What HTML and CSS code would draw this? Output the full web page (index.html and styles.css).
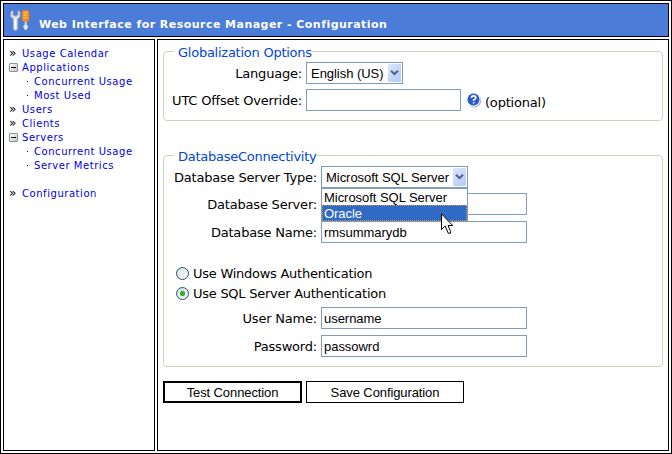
FILE: index.html
```html
<!DOCTYPE html>
<html lang="en">
<head>
<meta charset="utf-8">
<title>Web Interface for Resource Manager - Configuration</title>
<link rel="stylesheet" href="styles.css">
</head>
<body>
<div class="frame">
  <header class="banner">
    <svg class="tools" width="20" height="22" viewBox="0 0 20 22">
      <path d="M1 1.5 L3 0.5 V5 L5.5 6 L8 5 V0.5 L10 2 V6.5 L7.7 9 V18.5 Q7.5 20.5 5.5 20.5 T3.3 18.5 V9 L0.7 6.5 Z" fill="#dedede" stroke="#a9adb5" stroke-width=".8"/>
      <path d="M5 9 V18" stroke="#fff" stroke-width="1.5"/>
      <rect x="12.2" y=".6" width="6.8" height="10.6" rx="1.6" fill="#f6921e" stroke="#e27a13" stroke-width=".7"/>
      <path d="M13.5 2.5 H17 M13.5 5 H17 M13.5 7.5 H17" stroke="#ffc978" stroke-width="1.2"/>
      <path d="M14.9 11.4 H16.5 V14.5 L18.2 16.5 L16.8 19.7 H14.6 L13.2 16.5 L14.9 14.5 Z" fill="#e6e6e6" stroke="#b5b9c2" stroke-width=".5"/>
    </svg>
    <h1 class="title">Web Interface for Resource Manager - Configuration</h1>
  </header>
  <div class="columns">
    <nav class="menu">
      <a class="item"><i class="mark">»</i><span>Usage Calendar</span></a>
      <a class="item"><i class="fold"></i><span>Applications</span></a>
      <a class="item sub"><i class="dot"></i><span>Concurrent Usage</span></a>
      <a class="item sub"><i class="dot"></i><span>Most Used</span></a>
      <a class="item"><i class="mark">»</i><span>Users</span></a>
      <a class="item"><i class="mark">»</i><span>Clients</span></a>
      <a class="item"><i class="fold"></i><span>Servers</span></a>
      <a class="item sub"><i class="dot"></i><span>Concurrent Usage</span></a>
      <a class="item sub"><i class="dot"></i><span>Server Metrics</span></a>
      <a class="item spaced"><i class="mark">»</i><span>Configuration</span></a>
    </nav>
    <main class="content">
      <fieldset class="group global">
        <legend>Globalization Options</legend>
        <div class="row">
          <label class="label">Language:</label>
          <div class="select lang"><span>English (US)</span><b class="arrow"><svg width="9" height="6" viewBox="0 0 9 6"><path d="M1 .8 L4.5 4.2 L8 .8" fill="none" stroke="#4d6185" stroke-width="2"/></svg></b></div>
        </div>
        <div class="row">
          <label class="label">UTC Offset Override:</label>
          <div class="input offset"></div>
          <svg class="help" width="16" height="16" viewBox="0 0 16 16">
            <circle cx="8.4" cy="8.6" r="7" fill="#b9bcc4"/>
            <circle cx="7.5" cy="7.4" r="7" fill="#f3f4f8"/>
            <circle cx="7.5" cy="7.4" r="6" fill="#2a5bcb"/>
            <path d="M5.4 6 Q5.4 3.9 7.6 3.9 T9.8 5.8 Q9.8 7 7.6 8.2 V9 M7.6 10 V11.6" fill="none" stroke="#fff" stroke-width="1.6"/>
          </svg>
          <span class="optional">(optional)</span>
        </div>
      </fieldset>
      <fieldset class="group database">
        <legend>DatabaseConnectivity</legend>
        <div class="row">
          <label class="label">Database Server Type:</label>
          <div class="select type"><span>Microsoft SQL Server</span><b class="arrow"><svg width="9" height="6" viewBox="0 0 9 6"><path d="M1 .8 L4.5 4.2 L8 .8" fill="none" stroke="#4d6185" stroke-width="2"/></svg></b>
            <div class="list">
              <div class="option">Microsoft SQL Server</div>
              <div class="option chosen">Oracle</div>
              <svg class="cursor" width="13" height="22" viewBox="0 0 13 22"><path d="M.5 .8 V16.5 L4.2 13 L7.2 20.2 H9.6 V18.5 L7 12.5 H11.7 Z" fill="#fff" stroke="#000"/></svg>
            </div>
          </div>
        </div>
        <div class="row">
          <label class="label">Database Server:</label>
          <div class="input"></div>
        </div>
        <div class="row name">
          <label class="label">Database Name:</label>
          <div class="input">rmsummarydb</div>
        </div>
        <div class="choice first"><i class="radio"></i><span>Use Windows Authentication</span></div>
        <div class="choice"><i class="radio on"></i><span>Use SQL Server Authentication</span></div>
        <div class="row user">
          <label class="label">User Name:</label>
          <div class="input">username</div>
        </div>
        <div class="row name">
          <label class="label">Password:</label>
          <div class="input">passowrd</div>
        </div>
      </fieldset>
      <div class="buttons">
        <button class="button test">Test Connection</button>
        <button class="button save">Save Configuration</button>
      </div>
    </main>
  </div>
</div>
</body>
</html>
```
FILE: styles.css
```css
* { box-sizing: border-box; }
body { margin: 0; background: #fff; color: #000; }
.frame {
  width: 672px; height: 454px; padding: 2px;
  border: 1px solid #000;
  display: flex; flex-direction: column; gap: 2px;
  font: 13px/16px "DejaVu Sans", sans-serif;
  letter-spacing: -.2px;
}
.banner {
  height: 34px; border: 1px solid #000; background: #4a7cd8;
  display: flex; align-items: flex-start; padding: 6px 0 0 6px;
}
.tools { flex: none; }
.title {
  margin: 7px 0 0 9px; color: #fff;
  font-size: 11px; line-height: 16px; letter-spacing: .46px; white-space: nowrap;
}
.columns { flex: 1; display: flex; gap: 2px; }
.menu {
  width: 152px; border: 1px solid #000; padding: 6px 0 0 5px;
  font-size: 10px; line-height: 14px; letter-spacing: .55px; color: #0000e6;
}
.item { display: flex; align-items: center; height: 14px; white-space: nowrap; }
.item span { padding-top: 1px; }
.item i { flex: none; width: 13px; font-style: normal; color: #000; }
.item .mark { font-size: 12px; line-height: 12px; }
.item .fold {
  width: 9px; height: 9px; margin: 0 4px 0 0; border: 1px solid #7898b5; border-radius: 1px;
  background: linear-gradient(#000, #000) center / 5px 1px no-repeat, linear-gradient(135deg, #fff, #c9c3b8);
}
.item.sub { padding-left: 18px; }
.item .dot { width: 7px; height: 1px; background: linear-gradient(#000, #000) 0 0 / 1px 1px no-repeat; }
.spaced { margin-top: 14px; }
.content { flex: 1; border: 1px solid #000; padding: 3px 5px 0; }
.group {
  margin: 0; padding: 2px 0 0; min-width: 0;
  border: 1px solid #d0d0bf; border-radius: 4px;
}
.group legend {
  height: 17px; margin-left: 10px; padding: 2px 0 0 4px;
  line-height: 15px; letter-spacing: -.25px; color: #0046d5; white-space: nowrap;
}
.global { height: 78px; }
.database { height: 220px; margin-top: 26px; padding-top: 2px; }
.row { display: flex; height: 22px; align-items: center; margin-bottom: 5px; white-space: nowrap; }
.label { width: 138px; margin-right: 4px; padding-top: 2px; text-align: right; }
.database .label { width: 153px; }
.select, .input {
  height: 22px; border: 1px solid #7f9db9; background: #fff;
  font: 13px/22px "Liberation Sans", Arial, sans-serif; padding-left: 2px;
  letter-spacing: -.04px;
}
.input { width: 206px; }
.offset { width: 155px; }
.select { position: relative; display: flex; justify-content: space-between; padding: 0 1px 0 4px; }
.lang { width: 97px; }
.type { width: 147px; }
.arrow {
  width: 13px; height: 18px; margin-top: 1px; border-radius: 1px;
  display: flex; align-items: center; justify-content: center;
  background: linear-gradient(135deg, #dbe6fe, #b3c9f8);
}
.list {
  position: absolute; z-index: 2; left: -1px; top: 21px; width: 147px;
  border: 1px solid #7f9db9; background: #fff;
}
.option { height: 16px; line-height: 18px; padding-left: 2px; }
.chosen { background: #316ac5; color: #fff; outline: 1px dotted #ce953a; outline-offset: -1px; }
.cursor { position: absolute; left: 119px; top: 24px; }
.help { margin-left: 5px; }
.optional { margin: 6px 0 0 3px; }
.name { margin-top: 6px; }
.choice { display: flex; align-items: center; height: 20px; padding-left: 12px; white-space: nowrap; letter-spacing: -.26px; }
.choice span { padding-top: 2px; }
.first { margin-top: 20px; }
.radio {
  width: 13px; height: 13px; margin-right: 4px; border: 1px solid #1d5281; border-radius: 50%;
  background: linear-gradient(135deg, #dcdcd7, #fff);
}
.radio.on { background: radial-gradient(circle, #2fb52c 0 2.4px, transparent 3px), linear-gradient(135deg, #dcdcd7, #fff); }
.user { margin-top: 4px; }
.buttons { display: flex; gap: 4px; margin-top: 14px; }
.button {
  height: 22px; padding: 1px 0 0; border: 1px solid #000; background: #fff; color: #000;
  font: 13px/17px "Liberation Sans", Arial, sans-serif; letter-spacing: -.1px;
}
.test { width: 139px; border-width: 2px; }
.save { width: 158px; }
```
